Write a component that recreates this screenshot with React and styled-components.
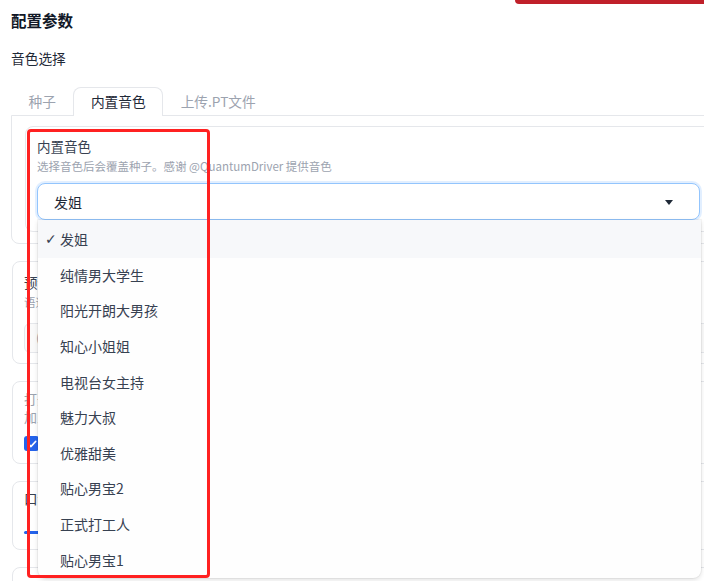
import React from "react";
import styled, { createGlobalStyle } from "styled-components";

const Global = createGlobalStyle`
  html, body { margin: 0; padding: 0; background: #ffffff; overflow: hidden; }
  body { font-family: "Noto Sans CJK SC", "Noto Sans", sans-serif; -webkit-font-smoothing: antialiased; }
  * { box-sizing: border-box; }
`;

const Page = styled.div`
  position: relative;
  width: 704px;
  height: 581px;
  overflow: hidden;
`;

const Column = styled.div`
  width: 780px;
  padding: 10px 0 0 11px;
  display: flex;
  flex-direction: column;
`;

const Title = styled.h2`
  margin: 0;
  font-size: 15.5px;
  line-height: 20px;
  font-weight: 700;
  color: #111827;
`;

const SectionLabel = styled.div`
  margin-top: 18px;
  font-size: 13.7px;
  line-height: 20px;
  color: #1f2937;
`;

const TabBar = styled.div`
  margin-top: 19px;
  display: flex;
  height: 28px;
  position: relative;
  z-index: 1;
`;

const Tab = styled.div`
  height: ${(p) => (p.$active ? "29px" : "28px")};
  padding: 0 16.5px ${(p) => (p.$active ? "2px" : "1px")};
  display: flex;
  align-items: center;
  font-size: 13.7px;
  line-height: 20px;
  color: ${(p) => (p.$active ? "#1f2937" : "#9ca3af")};
  background: #fff;
  border: 1px solid ${(p) => (p.$active ? "#e5e7eb" : "transparent")};
  border-bottom: none;
  border-radius: 8px 8px 0 0;
`;

const Panel = styled.div`
  width: 715px;
  border: 1px solid #e5e7eb;
  border-radius: 0 8px 8px 8px;
  padding: 10px 13px 11px;
`;

const Card = styled.div`
  border: 1px solid #e5e7eb;
  border-radius: 8px;
  background: #fff;
  padding: 9px 11px 11px;
`;

const Label = styled.div`
  font-size: 13.5px;
  line-height: 20px;
  color: #374151;
`;

const Desc = styled.div`
  margin-top: 1px;
  font-size: 11.5px;
  line-height: 18px;
  color: #9ca3af;
  white-space: nowrap;
`;

const SelectWrap = styled.div`
  position: relative;
  margin-top: 8px;
`;

const SelectBox = styled.div`
  height: 37px;
  border: 1px solid #93c5fd;
  border-radius: 8px;
  box-shadow: 0 0 0 2px rgba(191, 219, 254, 0.45);
  display: flex;
  align-items: center;
  justify-content: space-between;
  padding: 0 26px 0 16px;
  font-size: 14px;
  color: #1f2937;
  background: #fff;
`;

const Caret = styled.span`
  width: 0;
  height: 0;
  border-left: 4.5px solid transparent;
  border-right: 4.5px solid transparent;
  border-top: 5px solid #1f2937;
  margin-top: 1px;
`;

const Dropdown = styled.ul`
  position: absolute;
  left: 1px;
  right: -1px;
  top: 37px;
  margin: 0;
  padding: 0;
  list-style: none;
  background: #fefefe;
  border-radius: 0 0 8px 8px;
  box-shadow: 0 2px 5px rgba(0, 0, 0, 0.12), 0 0 0 1px rgba(0, 0, 0, 0.04);
  z-index: 5;
`;

const Option = styled.li`
  position: relative;
  height: ${(p) => (p.$first ? "37.6px" : "35.6px")};
  padding: ${(p) => (p.$first ? "1px" : "0")} 0 1px 22px;
  display: flex;
  align-items: center;
  font-size: 14px;
  color: #374151;
  background: ${(p) => (p.$selected ? "#f7f8fa" : "transparent")};
`;

const Check = styled.span`
  position: absolute;
  left: 7px;
  top: 50%;
  transform: translateY(-50%);
  font-size: 14px;
  color: #374151;
  font-family: "DejaVu Sans", sans-serif;
`;

const Stack = styled.div`
  margin-top: 17px;
  margin-left: 1px;
  display: flex;
  flex-direction: column;
  gap: 17px;
`;

const BgCard = styled.div`
  border: 1px solid #e5e7eb;
  border-radius: 8px;
  padding: ${(p) => p.$pad || "10px 11px 11px"};
  height: ${(p) => p.$h};
`;

const TextArea = styled.div`
  margin-top: 12px;
  height: 30px;
  border: 1px solid #e5e7eb;
  border-radius: 6px;
  background: #fafafa;
  padding: 4px 11px;
  font-size: 13px;
  color: #9ca3af;
`;

const MultiLabel = styled.div`
  font-size: 13px;
  line-height: 18px;
  height: 18px;
  overflow: hidden;
  color: #9ca3af;
`;

const CheckBoxEl = styled.div`
  margin-top: 10px;
  width: 15px;
  height: 15px;
  border-radius: 3px;
  background: #2563eb;
  display: flex;
  align-items: center;
  justify-content: center;
`;

const SliderTrack = styled.div`
  margin-top: 23px;
  height: 3px;
  width: 200px;
  border-radius: 2px;
  background: #2563eb;
`;

const TopButton = styled.div`
  position: absolute;
  top: 0;
  right: 0;
  width: 189px;
  height: 4px;
  background: #c0202a;
  border-bottom-left-radius: 5px;
`;

const Annotation = styled.div`
  position: absolute;
  left: 27px;
  top: 129px;
  width: 183px;
  height: 449px;
  border: 3px solid #ff2121;
  border-radius: 4px;
  pointer-events: none;
  z-index: 10;
`;

const voices = [
  "发姐",
  "纯情男大学生",
  "阳光开朗大男孩",
  "知心小姐姐",
  "电视台女主持",
  "魅力大叔",
  "优雅甜美",
  "贴心男宝2",
  "正式打工人",
  "贴心男宝1",
];

export default function App() {
  return (
    <Page>
      <Global />
      <TopButton />
      <Column>
        <Title>配置参数</Title>
        <SectionLabel>音色选择</SectionLabel>
        <TabBar>
          <Tab>种子</Tab>
          <Tab $active>内置音色</Tab>
          <Tab>上传.PT文件</Tab>
        </TabBar>
        <Panel>
          <Card>
            <Label>内置音色</Label>
            <Desc>选择音色后会覆盖种子。感谢 @QuantumDriver 提供音色</Desc>
            <SelectWrap>
              <SelectBox>
                <span>发姐</span>
                <Caret />
              </SelectBox>
              <Dropdown>
                {voices.map((v, i) => (
                  <Option key={v} $first={i === 0} $selected={i === 0}>
                    {i === 0 && <Check>✓</Check>}
                    {v}
                  </Option>
                ))}
              </Dropdown>
            </SelectWrap>
          </Card>
        </Panel>
        <Stack>
          <BgCard $h="103px">
            <Label>预设</Label>
            <Desc>语速</Desc>
            <TextArea>(</TextArea>
          </BgCard>
          <BgCard $h="83px" $pad="8px 11px 11px">
            <MultiLabel>打开</MultiLabel>
            <MultiLabel>加入</MultiLabel>
            <CheckBoxEl>
              <svg width="10" height="10" viewBox="0 0 10 10">
                <path d="M1.5 5.2 L4 7.5 L8.6 2.5" stroke="#fff" strokeWidth="1.8" fill="none" strokeLinecap="round" strokeLinejoin="round" />
              </svg>
            </CheckBoxEl>
          </BgCard>
          <BgCard $h="69px" $pad="6px 11px 11px">
            <Label>口语</Label>
            <SliderTrack />
          </BgCard>
          <BgCard $h="60px" />
        </Stack>
      </Column>
      <Annotation />
    </Page>
  );
}
